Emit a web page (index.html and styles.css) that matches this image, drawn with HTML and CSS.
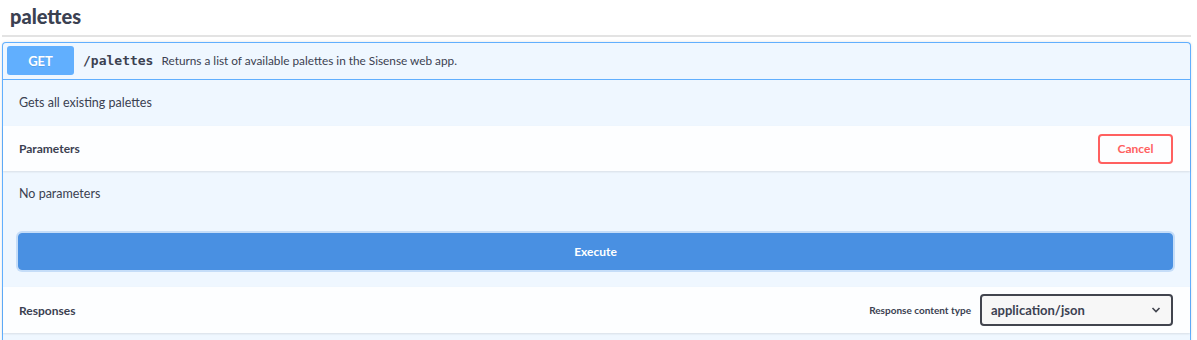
FILE: index.html
```html
<!DOCTYPE html>
<html lang="en">
  <head>
    <meta charset="UTF-8" />
    <meta name="viewport" content="width=device-width, initial-scale=1.0" />
    <title>palettes</title>
    <link rel="stylesheet" href="styles.css">
  </head>
  <body>
    <div class="section">
      <h4 class="tag">palettes</h4>
      <div class="opblock">
        <div class="summary">
          <span class="method">GET</span>
          <span class="path">/palettes</span>
          <span class="summary-desc">Returns a list of available palettes in the Sisense web app.</span>
        </div>
        <div class="desc">Gets all existing palettes</div>
        <div class="section-header">
          <h4 class="title">Parameters</h4>
          <button class="btn-cancel">Cancel</button>
        </div>
        <div class="params">
          <p class="no-params">No parameters</p>
          <button class="btn-execute">Execute</button>
        </div>
        <div class="section-header">
          <h4 class="title">Responses</h4>
          <label class="content-type">
            <span class="content-label">Response content type</span>
            <span class="select">
              application/json
              <svg class="chevron" width="10" height="6" viewBox="0 0 10 6"><path d="M1.5 1 L5 4.5 L8.5 1" fill="none" stroke="#41444e" stroke-width="1.6"/></svg>
            </span>
          </label>
        </div>
        <div class="rest"></div>
      </div>
    </div>
  </body>
</html>
```

FILE: styles.css
```css
* {
  margin: 0;
  padding: 0;
  box-sizing: border-box;
}
body {
  font-family: Lato, "Open Sans", sans-serif;
  color: #3b4151;
  background: #fff;
}
button {
  font-family: inherit;
  cursor: pointer;
}
.section {
  margin: 0 6px 0 2px;
}
.tag {
  height: 37px;
  padding: 4px 8px 0;
  font-size: 20px;
  font-weight: 900;
  border-bottom: 2px solid #e3e3e3;
}
.opblock {
  margin-top: 5px;
  border: 1px solid #61affe;
  border-bottom: none;
  border-radius: 4px 4px 0 0;
  background: #eff7ff;
  box-shadow: 0 0 3px rgba(0, 0, 0, 0.12);
}
.summary {
  display: flex;
  align-items: center;
  padding: 3px 4px 4px;
  border-bottom: 1px solid #61affe;
}
.method {
  width: 67px;
  height: 29px;
  display: flex;
  justify-content: center;
  align-items: center;
  border-radius: 3px;
  background: #61affe;
  color: #fff;
  font-size: 13px;
  font-weight: 700;
  text-shadow: 0 1px 0 rgba(0, 0, 0, 0.1);
}
.path {
  margin-left: 9px;
  font-family: "DejaVu Sans Mono", monospace;
  font-size: 13px;
  font-weight: 700;
}
.summary-desc {
  margin-left: 8px;
  font-size: 11.8px;
}
.desc {
  padding: 14px 16px;
  font-size: 12.5px;
  line-height: 18px;
}
.section-header {
  display: flex;
  justify-content: space-between;
  align-items: center;
  min-height: 45px;
  padding: 7px 17px 7px 16px;
  background: rgba(255, 255, 255, 0.85);
  box-shadow: 0 1px 2px rgba(0, 0, 0, 0.1);
}
.title {
  font-size: 12px;
  font-weight: 700;
}
.btn-cancel {
  width: 75px;
  height: 30px;
  border: 2px solid #ff6060;
  border-radius: 4px;
  background: transparent;
  color: #ff6060;
  font-size: 12px;
  font-weight: 700;
}
.params {
  padding: 14px 17px 17px 15px;
}
.no-params {
  padding-left: 1px;
  font-size: 12.5px;
  line-height: 18px;
}
.btn-execute {
  display: block;
  width: 100%;
  height: 37px;
  margin-top: 30px;
  border: 1px solid #4990e2;
  border-radius: 4px;
  background: #4990e2;
  box-shadow: 0 0 0 2px rgba(73, 144, 226, 0.25);
  color: #fff;
  font-size: 12px;
  font-weight: 700;
}
.content-type {
  display: flex;
  align-items: center;
}
.content-label {
  margin-right: 9px;
  font-size: 10px;
  font-weight: 700;
}
.select {
  width: 193px;
  height: 32px;
  display: flex;
  justify-content: space-between;
  align-items: center;
  padding: 0 10px 0 9px;
  border: 2px solid #41444e;
  border-radius: 4px;
  background: #f7f7f7;
  font-size: 13px;
  font-weight: 700;
}
.rest {
  height: 10px;
}
```
